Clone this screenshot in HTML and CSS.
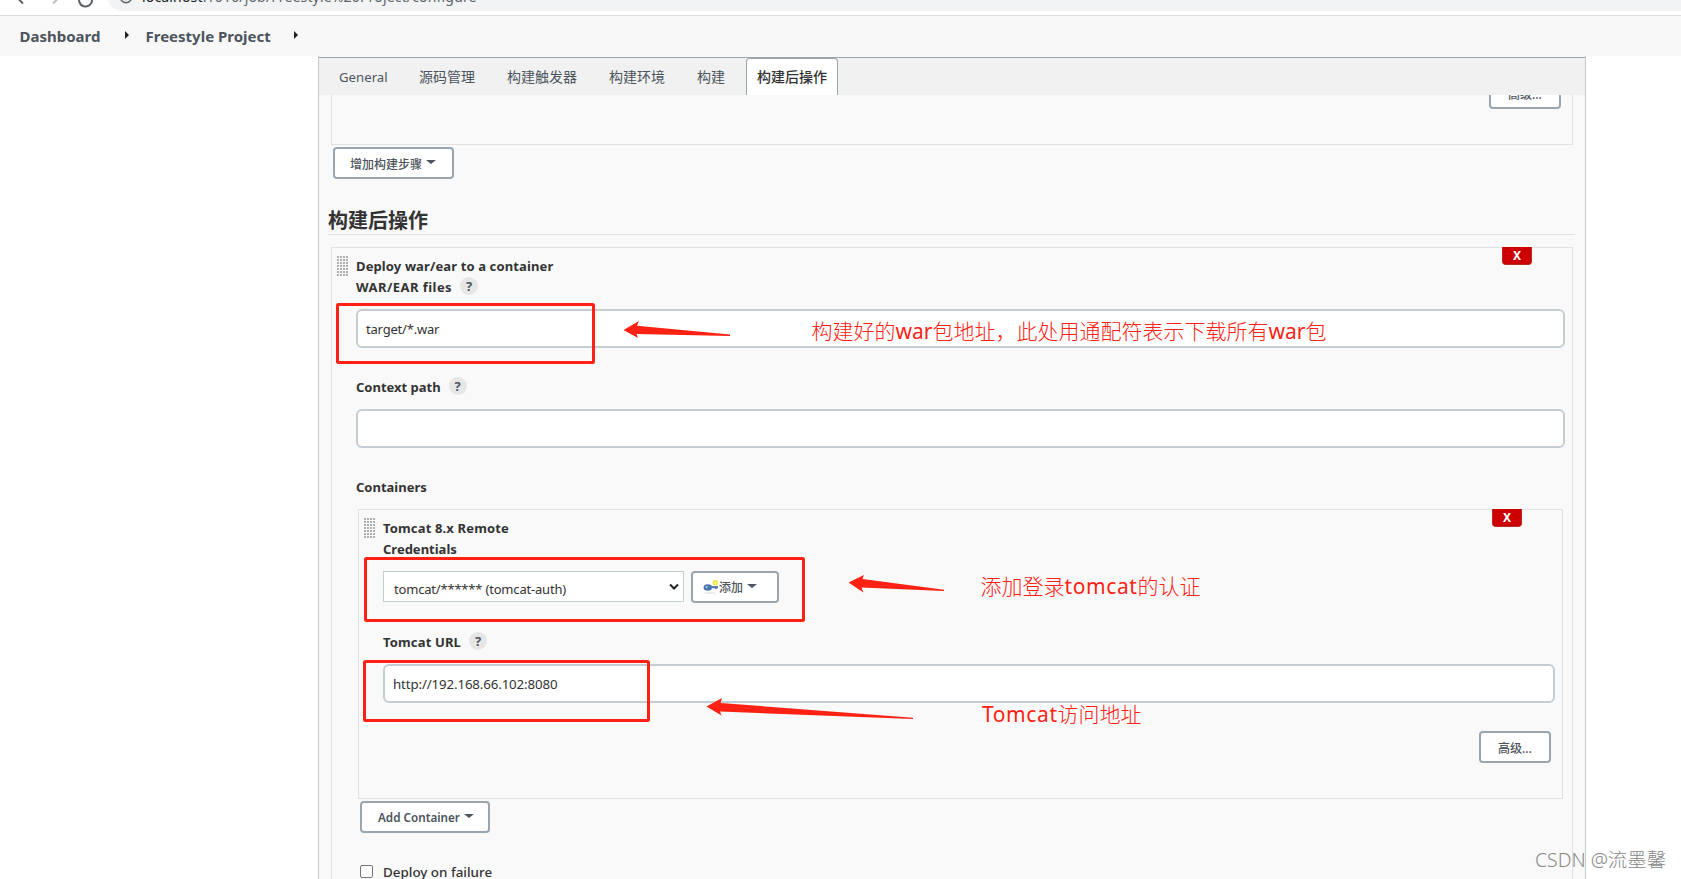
FILE: index.html
```
<!DOCTYPE html>
<html lang="zh-CN">
<head>
<meta charset="utf-8">
<title>Freestyle Project Config [Jenkins]</title>
<link rel="stylesheet" href="styles.css">
</head>
<body>
<div class="browser">
  <svg class="nav-icons" width="108" height="15" viewBox="0 0 108 15" fill="none" stroke-width="2">
    <path d="M23 3.500L18-1.500" stroke="#5f6368"/>
    <path d="M53 3.500L58-1.500" stroke="#bdbfc2"/>
    <path d="M80.500-4a6.500 6.500 0 1 0 11.500 3" stroke="#5f6368"/>
  </svg>
  <div class="omnibox">
    <svg class="info" width="14" height="14" viewBox="0 0 14 14" fill="none" stroke="#5f6368" stroke-width="1.500"><circle cx="7" cy="7" r="5.700"/><path d="M7 6v4.200M7 3.500v1.500"/></svg>
    <span class="url"><b>localhost</b>:1010/job/Freestyle%20Project/configure</span>
  </div>
</div>
<nav class="crumbs">
  <a class="crumb dash">Dashboard</a><i class="crumb-arrow"></i>
  <a class="crumb proj">Freestyle Project</a><i class="crumb-arrow"></i>
</nav>
<main class="panel">
  <div class="tabs">
    <a class="tab general">General</a><a class="tab">源码管理</a><a class="tab">构建触发器</a><a class="tab">构建环境</a><a class="tab">构建</a><a class="tab active">构建后操作</a>
  </div>
  <div class="content">
    <section class="step"><button class="btn adv">高级...</button></section>
    <button class="btn add-step">增加构建步骤<i class="caret"></i></button>
    <h2>构建后操作</h2>
    <section class="publisher">
      <button class="del">X</button>
      <div class="head"><i class="grip"></i><div class="titles">
        <div class="title t-deploy">Deploy war/ear to a container</div>
        <div class="title t-war">WAR/EAR files<span class="help">?</span></div>
      </div></div>
      <div class="input"><span class="v-war">target/*.war</span></div>
      <div class="title label t-context">Context path<span class="help">?</span></div>
      <div class="input"></div>
      <div class="title label t-cont">Containers</div>
      <section class="container">
        <button class="del">X</button>
        <div class="head"><i class="grip"></i><div class="titles">
          <div class="title t-tomcat">Tomcat 8.x Remote</div>
          <div class="title t-cred">Credentials</div>
        </div></div>
        <div class="cred-row">
          <div class="select"><span class="v-sel">tomcat/****** (tomcat-auth)</span><svg width="12" height="8" viewBox="0 0 12 8" fill="none" stroke="#222" stroke-width="2"><path d="M2 1.500L6 5.500L10 1.500"/></svg></div>
          <button class="btn add-cred"><svg class="key" width="16" height="16" viewBox="0 0 16 16"><ellipse cx="7" cy="14" rx="6" ry=".8" fill="#e4e4e4"/><circle cx="12.300" cy="3.800" r="1.900" fill="#fdf6a0" stroke="#f5e93c" stroke-width="1.600"/><path d="M7 7h8v2.200h-1V10h-2V9.200H7z" fill="#5680b0"/><ellipse cx="4.800" cy="8.500" rx="4.200" ry="3.200" fill="#4a79b0"/><circle cx="3.600" cy="8" r=".9" fill="#cfe0f2"/></svg><span>添加</span><i class="caret"></i></button>
        </div>
        <div class="title t-url">Tomcat URL<span class="help">?</span></div>
        <div class="input"><span class="v-url">http://192.168.66.102:8080</span></div>
        <button class="btn adv">高级...</button>
      </section>
      <button class="btn add-container"><span>Add Container</span><i class="caret"></i></button>
      <label class="check"><i class="box"></i><span>Deploy on failure</span></label>
    </section>
  </div>
</main>
<svg class="notes" width="1681" height="879" viewBox="0 0 1681 879">
  <g fill="none" stroke="#ff2214" stroke-width="3" stroke-linejoin="round">
    <rect x="337.500" y="304.500" width="256" height="58" rx="1"/>
    <rect x="365.500" y="558.500" width="438" height="62" rx="1"/>
    <rect x="364.500" y="661.500" width="284" height="59" rx="1"/>
  </g>
  <g fill="#ff2214">
    <path d="M623.500 330L639 321L637 325.700L730 334.500V336L636.500 334L638 338Z"/>
    <path d="M848.500 582.500L864 575L862.500 579L944 589.800V591L861.500 587.500L863.500 592.500Z"/>
    <path d="M706.500 706.500L722 698L720.500 703L913 717.800V719L720 711.500L721.500 715.500Z"/>
  </g>
</svg>
<div class="note n1">构建好的<span class="war">war</span>包地址，此处用通配符表示下载所有<span class="war">war</span>包</div>
<div class="note n2">添加登录<span class="tc">tomcat</span>的认证</div>
<div class="note n3"><span class="tc">Tomcat</span>访问地址</div>
<div class="watermark">CSDN @流墨馨</div>
</body>
</html>
```
FILE: styles.css
```
* { box-sizing: border-box; }
body { margin: 0; width: 1681px; height: 879px; overflow: hidden; position: relative; background: #fff; color: #333; font: 13.5px "Noto Sans", "Noto Sans CJK SC", sans-serif; }
i { font-style: normal; }
.browser { height: 16px; border-bottom: 1px solid #d9dbdc; display: flex; overflow: hidden; }
.nav-icons { flex: none; overflow: hidden; }
.omnibox { flex: 1; height: 28px; margin-top: -17px; border-radius: 14px 0 0 14px; background: #f1f3f4; display: flex; align-items: flex-start; }
.info { margin: 7px 9px 0 11px; }
.url { color: #5f6368; font-size: 14px; line-height: 20px; margin-top: 4px; letter-spacing: .17px; white-space: nowrap; }
.url b { font-weight: 400; color: #202124; }
.crumbs { height: 40px; background: #f8f8f8; display: flex; align-items: center; padding: 0 0 3px 19.500px; }
.crumb { font-size: 15px; font-weight: 700; color: #4d545d; line-height: 20px; padding-top: 2px; white-space: nowrap; }
.dash { width: 80px; }
.proj { width: 124px; }
.crumb-arrow { width: 0; height: 0; border: 4px solid transparent; border-left: 4px solid #222; border-right: 0; margin: 0 17px 0 25px; }
.proj + .crumb-arrow { margin-left: 24px; }
.panel { margin-left: 318px; width: 1268px; height: 823px; border: solid #c4cbcf; border-width: 0 1px; background: #f9f9f9; overflow: hidden; padding-top: 1px; }
.tabs { height: 38px; background: #f1f1f1; border-top: 1px solid #9aa5ad; display: flex; padding-left: 10px; position: relative; }
.tab { font-size: 14px; color: #4d545d; line-height: 37px; padding: 0 10px; margin-right: 12px; white-space: nowrap; }
.tab.general { width: 68px; font-size: 13.2px; line-height: 39px; }
.tab.active { color: #333; font-weight: 500; background: #fff; border: 1px solid #9aa5ad; border-bottom: 0; border-radius: 4px 4px 0 0; line-height: 35px; margin-left: -1px; padding: 0 10px; }
.content { height: 784px; overflow: hidden; padding: 0 10px; }
.step { display: flow-root; height: 50px; margin: 0 2px; border: 1px solid #dfe1e2; border-top: 0; }
.step .adv { margin-top: -18px; margin-right: 11px; padding-top: 1px; }
.btn { border: 2px solid #9aa6af; border-radius: 4px; background: #fff; color: #4d545d; font: 500 12px "Noto Sans", "Noto Sans CJK SC", sans-serif; height: 32px; display: flex; align-items: center; padding: 0; white-space: nowrap; }
.adv { width: 72px; margin-left: auto; justify-content: center; }
.caret { width: 0; height: 0; border: 5px solid transparent; border-top-color: #4d545d; border-top-width: 4.500px; border-bottom: 0; margin-left: 4px; margin-top: -3px; }
.add-step { width: 121px; margin: 2px 0 0 4px; padding: 1px 0 0 15px; }
h2 { margin: 27px 0 0 -1px; height: 29px; font-size: 20px; line-height: 29px; font-weight: 700; border-bottom: 1px solid #dfe1e2; }
.publisher { margin: 12px 2px 0; height: 700px; border: 1px solid #dfe1e2; padding: 0 7px 0 24px; position: relative; }
.del { position: absolute; top: -1px; right: 40px; width: 30px; height: 18px; padding: 1px 0 0; border: 1px solid #bd2b20; border-top: 0; border-radius: 0 0 4px 4px; background: #c00; color: #fff; font: 700 12px/16px "Noto Sans", sans-serif; }
.head { display: flex; margin-left: -19px; }
.grip { width: 11px; height: 20px; margin: 8px 8px 0 0; background: radial-gradient(circle at 1px 1px, #b0b0b0 0 .8px, transparent 1.300px) 0 0 / 3px 3px; }
.titles { padding-top: 8px; }
.title { height: 21px; line-height: 21px; font-weight: 700; font-size: 13px; display: flex; align-items: center; white-space: nowrap; }
.t-deploy { letter-spacing: .12px; }
.t-war { letter-spacing: .45px; }
.t-tomcat, .t-url { letter-spacing: .15px; }
.help { width: 18px; height: 18px; margin: -3px 0 0 8px; border-radius: 50%; background: #e6e6e6; color: #4d545d; text-align: center; line-height: 18px; font-size: 13px; letter-spacing: 0; }
.input { height: 39px; border: 2px solid #c3cdd2; border-radius: 6px; background: #fff; padding-left: 8px; line-height: 37px; white-space: nowrap; }
.v-war { font-size: 13px; letter-spacing: -.2px; }
.v-url { font-size: 13.3px; letter-spacing: -.13px; }
.v-sel { font-size: 13px; letter-spacing: -.19px; padding-top: 4px; }
.publisher > .head { height: 61px; }
.label { margin-top: 29px; }
.publisher > .label + .input { margin-top: 11px; }
.container { height: 290px; margin: 11px 2px 0 2px; border: 1px solid #dfe1e2; padding: 0 7px 0 24px; position: relative; }
.cred-row { display: flex; gap: 7px; margin-top: 11px; }
.select { width: 301px; height: 31px; border: 1px solid #c3cdd2; background: #fff; padding: 0 3px 0 10px; display: flex; align-items: center; justify-content: space-between; white-space: nowrap; }
.add-cred { width: 88px; padding-left: 10px; }
.t-url { margin-top: 29px; }
.t-url + .input { margin-top: 11px; }
.container .adv { margin-top: 28px; margin-right: 4px; padding-top: 1px; }
.add-container { width: 130px; margin: 2px 0 0 4px; padding-left: 16px; }
.add-container span { font-weight: 600; font-size: 11.7px; }
.check { display: flex; align-items: center; margin: 28px 0 0 4px; gap: 10px; height: 22px; font-weight: 500; font-size: 13.4px; white-space: nowrap; }
.box { width: 13px; height: 13px; border: 1px solid #767676; border-radius: 2px; background: #fff; margin-top: -2px; }
.notes { position: absolute; left: 0; top: 0; }
.note { position: absolute; color: #ff2214; font: 300 21px/28px "Noto Sans", "Noto Sans CJK SC", sans-serif; white-space: nowrap; }
.note span { font-weight: 400; }
.tc { letter-spacing: .6px; }
.n1 { left: 811.500px; top: 317px; }
.n2 { left: 980.500px; top: 572px; }
.n3 { left: 982px; top: 700px; }
.watermark { position: absolute; left: 1535px; top: 846px; font: 300 19.4px/28px "Noto Sans", "Noto Sans CJK SC", sans-serif; color: #888; white-space: nowrap; }
```
